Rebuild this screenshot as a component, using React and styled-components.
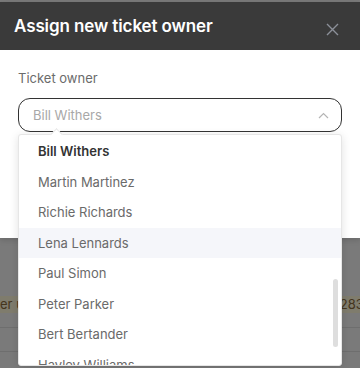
import React from 'react';
import styled, { createGlobalStyle } from 'styled-components';

const GlobalStyle = createGlobalStyle`
  html, body {
    margin: 0;
    padding: 0;
    background: #f4f4f4;
  }
  body {
    font-family: Inter, "Noto Sans", "Liberation Sans", sans-serif;
    -webkit-font-smoothing: antialiased;
  }
`;

const Screen = styled.div`
  position: relative;
  width: 360px;
  height: 368px;
  overflow: hidden;
  background: #f4f4f4;
`;

const PageBehind = styled.div`
  display: flex;
  flex-direction: column;
  padding-top: 296px;
  font-size: 13px;
  color: #8a6a3c;
`;

const TableRow = styled.div`
  display: flex;
  justify-content: space-between;
  align-items: center;
  height: ${(p) => p.h}px;
  background: ${(p) => (p.warn ? '#fef8da' : 'transparent')};
  border-bottom: 1px solid ${(p) => (p.line ? '#dcdcdc' : 'transparent')};
`;

const Cell = styled.span`
  white-space: nowrap;
  margin-right: ${(p) => (p.right ? '-9px' : '0')};
`;

const Backdrop = styled.div`
  position: absolute;
  inset: 0;
  background: rgba(0, 0, 0, 0.5);
`;

const Modal = styled.div`
  position: absolute;
  top: 2px;
  left: 0;
  right: 0;
  background: #fff;
  box-shadow: 0 2px 6px rgba(0, 0, 0, 0.15);
`;

const Header = styled.div`
  display: flex;
  align-items: center;
  justify-content: space-between;
  height: 48px;
  padding: 0 21px 0 14px;
  background: #3a3a3a;
`;

const Title = styled.h2`
  margin: 0;
  font-size: 17px;
  font-weight: 600;
  color: #fff;
  letter-spacing: -0.1px;
`;

const CloseButton = styled.button`
  display: flex;
  padding: 0;
  border: 0;
  background: none;
  margin-top: 6px;
`;

const Body = styled.div`
  padding: 20px 18px 106px;
`;

const Label = styled.div`
  font-size: 13px;
  color: #6b6b6b;
  margin-bottom: 12px;
`;

const SelectBox = styled.div`
  position: relative;
  display: flex;
  align-items: center;
  justify-content: space-between;
  height: 34px;
  box-sizing: border-box;
  padding: 0 12px 0 14px;
  border: 1.3px solid #333;
  border-radius: 12px;
  font-size: 13px;
  color: #a8a8a8;
`;

const Menu = styled.div`
  position: absolute;
  top: 134px;
  left: 18px;
  right: 18px;
  height: 230px;
  background: #fff;
  border: 1px solid #e6e6e6;
  border-radius: 3px;
  box-shadow: 0 2px 10px rgba(0, 0, 0, 0.12);
`;

const Notch = styled.span`
  position: absolute;
  top: -5px;
  left: 33px;
  width: 8px;
  height: 8px;
  background: #fff;
  border-left: 1px solid #e6e6e6;
  border-top: 1px solid #e6e6e6;
  transform: rotate(45deg);
`;

const OptionList = styled.div`
  position: relative;
  height: 100%;
  padding-top: 1px;
  box-sizing: border-box;
  overflow: hidden;
`;

const Option = styled.div`
  display: flex;
  align-items: center;
  height: 30.5px;
  padding-left: 19px;
  font-size: 13px;
  color: ${(p) => (p.selected ? '#333' : '#6a6a6a')};
  font-weight: ${(p) => (p.selected ? 600 : 400)};
  background: ${(p) => (p.active ? '#f5f6fa' : 'transparent')};
`;

const Scrollbar = styled.div`
  position: absolute;
  top: 144px;
  right: 3px;
  width: 5px;
  height: 68px;
  border-radius: 3px;
  background: #dedede;
`;

const owners = [
  'Bill Withers',
  'Martin Martinez',
  'Richie Richards',
  'Lena Lennards',
  'Paul Simon',
  'Peter Parker',
  'Bert Bertander',
  'Hayley Williams',
];

const App = () => {
  return (
    <Screen>
      <GlobalStyle />
      <PageBehind>
        <TableRow h={16} warn>
          <Cell>er u</Cell>
          <Cell right>2831</Cell>
        </TableRow>
        <TableRow h={14} line />
        <TableRow h={23} line />
      </PageBehind>
      <Backdrop />
      <Modal>
        <Header>
          <Title>Assign new ticket owner</Title>
          <CloseButton>
            <svg width="13" height="13" viewBox="0 0 13 13">
              <path d="M1 1L12 12M12 1L1 12" stroke="#8c9099" strokeWidth="1.4" fill="none" />
            </svg>
          </CloseButton>
        </Header>
        <Body>
          <Label>Ticket owner</Label>
          <SelectBox>
            <span>Bill Withers</span>
            <svg width="11" height="7" viewBox="0 0 11 7">
              <path d="M1 6L5.5 1.5L10 6" stroke="#b5b5b5" strokeWidth="1.2" fill="none" />
            </svg>
          </SelectBox>
        </Body>
      </Modal>
      <Menu>
        <Notch />
        <OptionList>
          {owners.map((name, i) => (
            <Option key={name} selected={i === 0} active={i === 3}>
              {name}
            </Option>
          ))}
          <Scrollbar />
        </OptionList>
      </Menu>
    </Screen>
  );
};

export default App;
